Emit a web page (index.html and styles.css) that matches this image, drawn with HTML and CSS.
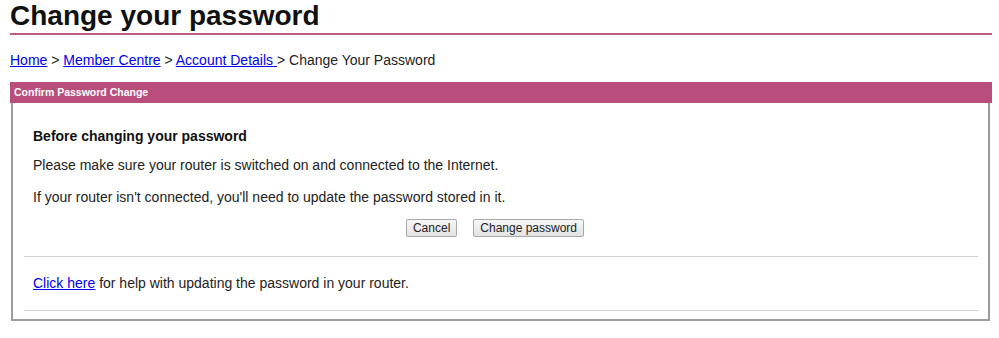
FILE: index.html
```html
<!DOCTYPE html>
<html lang="en">
<head>
<meta charset="utf-8">
<title>Change your password</title>
<link rel="stylesheet" href="styles.css">
</head>
<body>
<div class="page">
  <h1 class="page-title">Change your password</h1>
  <div class="breadcrumb">
    <a href="#">Home</a> &gt; <a href="#">Member Centre</a> &gt; <a href="#">Account Details </a>&gt; Change Your Password
  </div>
  <div class="panel">
    <div class="panel-head">Confirm Password Change</div>
    <div class="panel-body">
      <div class="section">
        <h2 class="section-title">Before changing your password</h2>
        <p class="p1">Please make sure your router is switched on and connected to the Internet.</p>
        <p class="p2">If your router isn't connected, you'll need to update the password stored in it.</p>
      </div>
      <div class="actions">
        <button class="btn" type="button">Cancel</button>
        <button class="btn" type="button">Change password</button>
      </div>
      <hr class="rule rule-1">
      <p class="help"><a href="#">Click here</a> for help with updating the password in your router.</p>
      <hr class="rule rule-2">
    </div>
  </div>
</div>
</body>
</html>
```
FILE: styles.css
```css
html, body {
  margin: 0;
  padding: 0;
  background: #ffffff;
}
body {
  font-family: "Liberation Sans", Arial, sans-serif;
  color: #222222;
}
.page {
  margin-left: 10px;
  width: 982px;
}
.page-title {
  margin: 0;
  font-size: 28px;
  line-height: 32px;
  font-weight: bold;
  color: #111111;
  padding-bottom: 1px;
  border-bottom: 2px solid #bf5a85;
}
.breadcrumb {
  margin-top: 17px;
  font-size: 14px;
  line-height: 16px;
  color: #222222;
}
.breadcrumb a, .help a {
  color: #0000ee;
  text-decoration: underline;
}
.panel {
  margin-top: 14px;
}
.panel-head {
  background: #b94d7b;
  color: #ffffff;
  font-weight: bold;
  font-size: 10.5px;
  height: 21px;
  line-height: 21px;
  padding-left: 4px;
}
.panel-body {
  margin: 0 2px 0 1px;
  border: 2px solid #9c9c9c;
  border-top: none;
  padding: 25px 10px 8px 11px;
}
.section {
  padding: 0 9px;
}
.section-title {
  margin: 0;
  font-size: 14px;
  line-height: 16px;
  font-weight: bold;
  color: #111111;
}
.p1, .p2, .help {
  font-size: 14px;
  line-height: 16px;
}
.p1 {
  margin: 13px 0 0;
}
.p2 {
  margin: 16px 0 0;
}
.actions {
  margin-top: 14px;
  display: flex;
  justify-content: center;
  gap: 16px;
  padding-right: 12px;
}
.btn {
  font-family: "Liberation Sans", Arial, sans-serif;
  font-size: 12px;
  line-height: 14px;
  height: 18px;
  padding: 1px 6px;
  color: #222222;
  background: linear-gradient(#f6f6f6, #e3e3e3);
  border: 1px solid #a8a8a8;
  border-radius: 2px;
}
.rule {
  border: none;
  border-top: 1px solid #d2d2d2;
  height: 0;
  margin: 0;
}
.rule-1 {
  margin-top: 19px;
}
.help {
  margin: 18px 0 0;
  padding-left: 9px;
}
.rule-2 {
  margin-top: 19px;
}
```
